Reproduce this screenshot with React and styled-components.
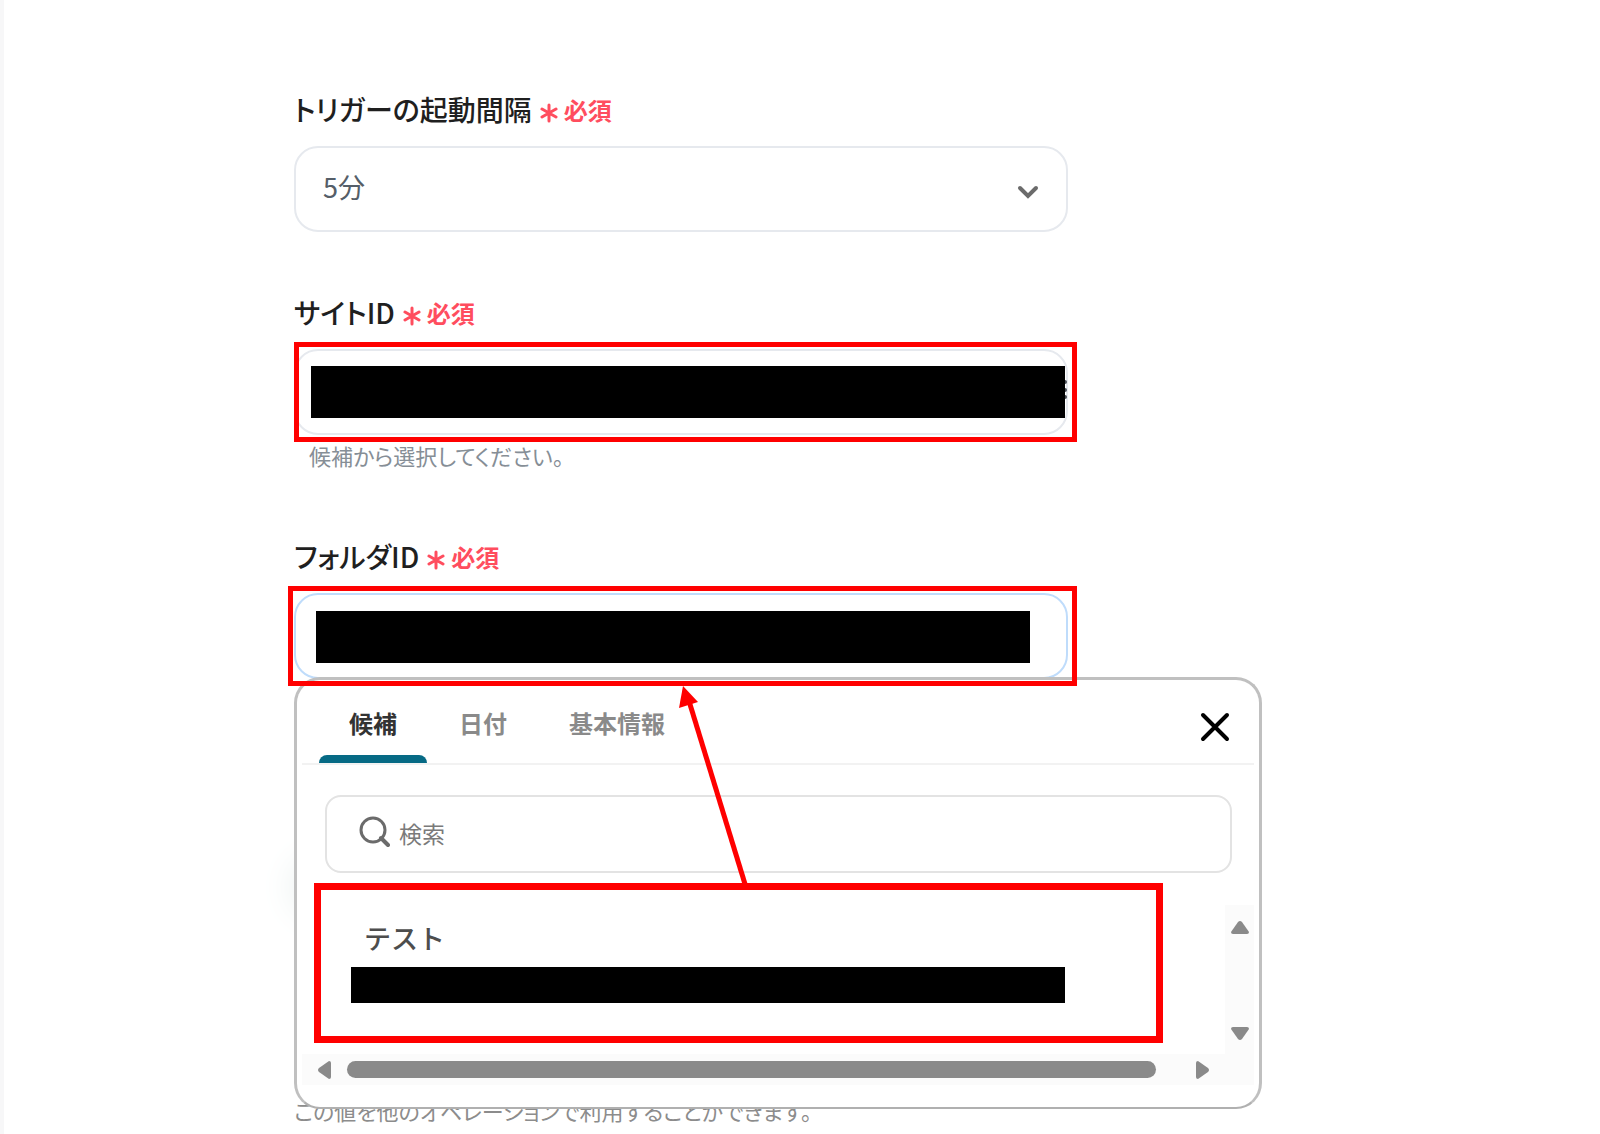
import React from 'react'
import styled, { createGlobalStyle } from 'styled-components';

const GlobalStyle = createGlobalStyle`
    *, *::before, *::after {
        box-sizing: border-box;
    }
    body {
        margin: 0;
        background: #ffffff;
        font-family: "Noto Sans CJK JP", "Noto Sans", sans-serif;
    }
    button, input, select {
        font-family: inherit;
        margin: 0;
    }
    `;

const Page = styled.main`
    min-height: 100vh;
    border-left: 4px solid #f7f7f8;
    padding: 90px 24px 0 290px;
    overflow: hidden;
    `;

const FormColumn = styled.form`
    max-width: 774px;
    display: flex;
    flex-direction: column;
    gap: 61px;
    `;

const FieldGroup = styled.div`
    display: flex;
    flex-direction: column;
    `;

const LabelRow = styled.div`
    display: flex;
    align-items: center;
    gap: 8px;
    height: 40px;
    margin-bottom: 16px;
    white-space: nowrap;
    `;

const Label = styled.label`
    font-size: 28px;
    font-weight: 500;
    line-height: 38px;
    padding-bottom: 2px;
    color: #1f1f1f;
    font-feature-settings: "palt";
    `;

const Required = styled.span`
    display: flex;
    align-items: center;
    gap: 6px;
    font-size: 24px;
    font-weight: 700;
    line-height: 38px;
    color: #ff4d5e;

    svg {
        margin-top: 5px;
    }
    `;

const Control = styled.div`
    position: relative;
    height: 86px;
    `;

const TextBox = styled.input`
    width: 100%;
    height: 100%;
    padding: 0 26px;
    border: 2px solid ${(props) => (props.$active ? '#bfdcfb' : '#e6e9ee')};
    border-radius: 24px;
    background: #ffffff;
    font-size: 26px;
    color: #4f5862;
    outline: none;
    `;

const SelectBox = styled.select`
    width: 100%;
    height: 100%;
    padding: 0 27px 5px;
    border: 2px solid #e6e9ee;
    border-radius: 24px;
    background: #ffffff;
    font-family: inherit;
    font-size: 27px;
    color: #555e68;
    appearance: none;
    outline: none;
    `;

const Chevron = styled.svg`
    position: absolute;
    top: 37px;
    right: 28px;
    pointer-events: none;
    `;

const MoreButton = styled.button`
    position: absolute;
    top: 30px;
    right: 0;
    display: flex;
    padding: 0;
    border: 0;
    background: none;
    `;

const Redaction = styled.span`
    position: absolute;
    top: ${(props) => props.$top}px;
    left: ${(props) => props.$left}px;
    right: ${(props) => props.$right}px;
    height: 52px;
    background: #000000;
    `;

const Highlight = styled.span`
    position: absolute;
    z-index: 3;
    top: -7px;
    bottom: -7px;
    left: ${(props) => props.$left}px;
    right: -9px;
    border: 5px solid #ff0000;
    pointer-events: none;
    `;

const Helper = styled.p`
    margin: 3px 0 0;
    padding: 0 0 4px 15px;
    font-size: 22px;
    line-height: 34px;
    color: #868e96;
    font-feature-settings: "palt";
    `;

const Arrow = styled.svg`
    position: absolute;
    z-index: 4;
    top: 93px;
    left: 380px;
    pointer-events: none;
    `;

const Popover = styled.section`
    position: absolute;
    z-index: 2;
    top: 84px;
    left: 0;
    width: 968px;
    padding: 0 5px 22px;
    border: 3px solid #c0c0c0;
    border-bottom: 2px solid #b0b0b0;
    border-radius: 26px;
    background: #ffffff;
    `;

const TabBar = styled.div`
    display: flex;
    justify-content: space-between;
    height: 85px;
    padding: 0 24px 0 17px;
    border-bottom: 2px solid #f2f2f2;
    `;

const TabList = styled.div`
    display: flex;
    gap: 2px;
    `;

const Tab = styled.button`
    display: flex;
    flex-direction: column;
    justify-content: space-between;
    padding: 25px 0 0;
    border: 0;
    background: none;
    font-size: 24px;
    font-weight: 700;
    line-height: 36px;
    color: ${(props) => (props.$active ? '#333333' : '#8a8a8a')};

    span {
        padding: 0 30px;
    }
    &::after {
        content: '';
        width: 100%;
        height: 8px;
        border-radius: 8px 8px 0 0;
        background: ${(props) => (props.$active ? '#066a85' : 'transparent')};
    }
    `;

const CloseButton = styled.button`
    display: flex;
    align-items: center;
    padding: 10px 0 0;
    border: 0;
    background: none;
    `;

const SearchBox = styled.label`
    display: flex;
    align-items: center;
    gap: 9px;
    height: 78px;
    margin: 30px 22px 10px 23px;
    padding: 0 31px;
    border: 2px solid #e3e3e3;
    border-radius: 16px;

    svg {
        flex: none;
        margin-bottom: 4px;
    }
    input {
        flex: 1;
        min-width: 0;
        padding: 0 0 2px;
        border: 0;
        outline: none;
        background: none;
        font-size: 23px;
        line-height: 34px;
        color: #333333;
    }
    input::placeholder {
        color: #7a7a7a;
        opacity: 1;
    }
    `;

const Results = styled.div`
    display: grid;
    grid-template-columns: 1fr 29px;
    `;

const Option = styled.button`
    display: flex;
    flex-direction: column;
    align-items: flex-start;
    height: 160px;
    margin: 0 62px 11px 12px;
    padding: 28px 91px 0 30px;
    border: 7px solid #ff0000;
    background: #ffffff;
    font-size: 27px;
    font-weight: 500;
    line-height: 40px;
    color: #4d4d4d;

    span {
        padding-left: 13px;
    }
    &::after {
        content: '';
        width: 100%;
        height: 36px;
        margin-top: 9px;
        background: #000000;
    }
    `;

const VerticalBar = styled.div`
    display: flex;
    flex-direction: column;
    align-items: center;
    justify-content: space-between;
    margin-top: 22px;
    padding: 15px 0 13px;
    background: #fbfbfb;
    `;

const HorizontalBar = styled.div`
    grid-column: 1 / -1;
    display: flex;
    align-items: center;
    height: 31px;
    padding: 0 44px 0 15px;
    background: #fbfbfb;
    `;

const Thumb = styled.div`
    flex: 1;
    height: 17px;
    margin: 0 39px 0 15px;
    border-radius: 9px;
    background: #8a8a8a;
    `;

const ScrollButton = styled.button`
    display: flex;
    padding: 0;
    border: 0;
    background: none;
    `;

const TestArea = styled.div`
    display: flex;
    flex-direction: column;
    gap: 180px;
    padding-top: 120px;
    `;

const Glow = styled.div`
    width: 200px;
    height: 54px;
    border-radius: 27px;
    background: #f5f8f8;
    box-shadow: 0 0 36px 2px #eaf0ef;
    `;

const Note = styled.p`
    margin: 0;
    font-size: 22px;
    line-height: 32px;
    color: #8c8c8c;
    white-space: nowrap;
    font-feature-settings: "palt";
    `;

const arrows = {
    up: 'M8 2 Q10 0 12 2 L19 12 Q19 14 17 14 H3 Q1 14 1 12 Z',
    down: 'M8 13 Q10 15 12 13 L19 3 Q19 1 17 1 H3 Q1 1 1 3 Z',
    left: 'M2 8 Q0 10 2 12 L12 19 Q14 19 14 17 V3 Q14 1 12 1 Z',
    right: 'M13 8 Q15 10 13 12 L3 19 Q1 19 1 17 V3 Q1 1 3 1 Z',
};

const ScrollArrow = ({ dir, label }) => {
    const vertical = dir === 'up' || dir === 'down';
    return (
        <ScrollButton type="button" aria-label={label}>
            <svg width={vertical ? 20 : 15} height={vertical ? 15 : 20}>
                <path d={arrows[dir]} fill="#8a8a8a" />
            </svg>
        </ScrollButton>
    )
}

const FieldLabel = ({ htmlFor, children }) => (
    <LabelRow>
        <Label htmlFor={htmlFor}>{children}</Label>
        <Required>
            <svg width="18" height="20" viewBox="0 0 18 20" aria-hidden="true">
                <path d="M9 2V18M2 6L16 14M16 6L2 14" stroke="#ff4d5e" strokeWidth="3" strokeLinecap="round" />
            </svg>
            必須
        </Required>
    </LabelRow>
)

const SuggestPopover = () => (
    <Popover>
        <TabBar>
            <TabList role="tablist">
                <Tab type="button" role="tab" aria-selected="true" $active><span>候補</span></Tab>
                <Tab type="button" role="tab" aria-selected="false"><span>日付</span></Tab>
                <Tab type="button" role="tab" aria-selected="false"><span>基本情報</span></Tab>
            </TabList>
            <CloseButton type="button" aria-label="閉じる">
                <svg width="30" height="30" viewBox="0 0 30 30">
                    <path d="M3 3L27 27M27 3L3 27" stroke="#000000" strokeWidth="4" strokeLinecap="round" />
                </svg>
            </CloseButton>
        </TabBar>

        <SearchBox>
            <svg width="32" height="32" viewBox="0 0 32 32" fill="none" aria-hidden="true">
                <circle cx="15" cy="14" r="12" stroke="#6b6b6b" strokeWidth="3" />
                <path d="M23 22L30 29" stroke="#6b6b6b" strokeWidth="4" strokeLinecap="round" />
            </svg>
            <input type="text" placeholder="検索" aria-label="検索" />
        </SearchBox>

        <Results>
            <Option type="button"><span>テスト</span></Option>
            <VerticalBar>
                <ScrollArrow dir="up" label="上へ" />
                <ScrollArrow dir="down" label="下へ" />
            </VerticalBar>
            <HorizontalBar>
                <ScrollArrow dir="left" label="左へ" />
                <Thumb />
                <ScrollArrow dir="right" label="右へ" />
            </HorizontalBar>
        </Results>
    </Popover>
)

const App = () => {
    return (
        <>
            <GlobalStyle />
            <Page>
                <FormColumn>
                    <FieldGroup>
                        <FieldLabel htmlFor="interval">トリガーの起動間隔</FieldLabel>
                        <Control>
                            <SelectBox id="interval" defaultValue="5">
                                <option value="5">5分</option>
                            </SelectBox>
                            <Chevron width="24" height="18" viewBox="0 0 24 18" fill="none">
                                <path d="M4 5L12 13L20 5" stroke="#6b6b6b" strokeWidth="4" strokeLinecap="round" />
                            </Chevron>
                        </Control>
                    </FieldGroup>

                    <FieldGroup>
                        <FieldLabel htmlFor="site">サイトID</FieldLabel>
                        <Control>
                            <TextBox id="site" type="text" />
                            <MoreButton type="button" aria-label="メニュー">
                                <svg width="5" height="22" fill="#4a4f55">
                                    <circle cx="2" cy="3" r="2" />
                                    <circle cx="2" cy="11" r="2" />
                                    <circle cx="2" cy="18" r="2" />
                                </svg>
                            </MoreButton>
                            <Redaction $top={17} $left={17} $right={3} />
                            <Highlight $left={0} />
                        </Control>
                        <Helper>候補から選択してください。</Helper>
                    </FieldGroup>

                    <FieldGroup>
                        <FieldLabel htmlFor="folder">フォルダID</FieldLabel>
                        <Control>
                            <TextBox id="folder" type="text" $active />
                            <Redaction $top={18} $left={22} $right={38} />
                            <SuggestPopover />
                            <Highlight $left={-6} />
                            <Arrow width="80" height="200" viewBox="0 0 80 200">
                                <path d="M15 15L71 198" stroke="#ff0000" strokeWidth="5" />
                                <path d="M9 0L5 22L24 16Z" fill="#ff0000" />
                            </Arrow>
                        </Control>
                    </FieldGroup>

                    <TestArea>
                        <Glow />
                        <Note>この値を他のオペレーションで利用することができます。</Note>
                    </TestArea>
                </FormColumn>
            </Page>
        </>
    )
}

export default App
